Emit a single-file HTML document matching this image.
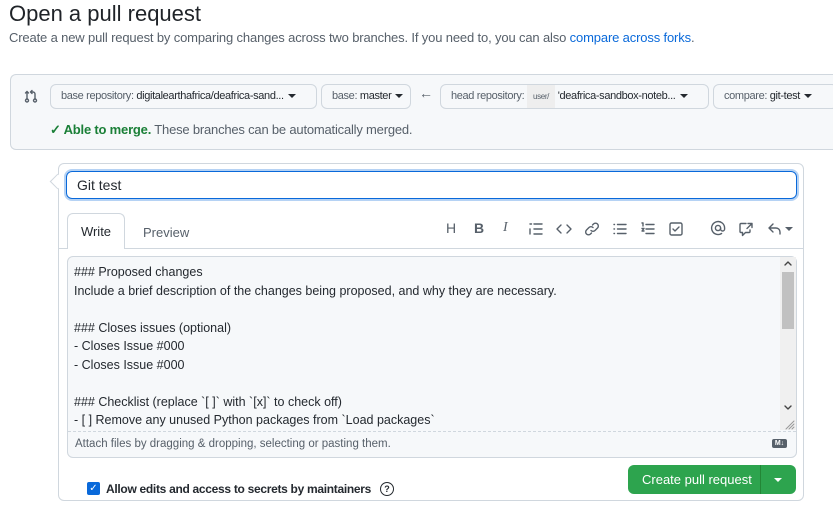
<!DOCTYPE html>
<html><head><meta charset="utf-8"><style>
*{box-sizing:border-box;margin:0;padding:0}
body{width:833px;height:511px;overflow:hidden;background:#fff;font-family:"Liberation Sans",Arial,sans-serif;color:#24292f;position:relative}
.a{position:absolute;white-space:nowrap}
.btn{position:absolute;height:25px;border:1px solid #d0d7de;border-radius:6px;background:#f6f8fa;font-size:11px;letter-spacing:-0.35px;line-height:23px;padding-left:10px;color:#57606a;white-space:nowrap;overflow:hidden}
.btn b{color:#24292f;font-weight:normal}
.car{display:inline-block;width:0;height:0;border-left:4px solid transparent;border-right:4px solid transparent;border-top:4px solid #24292f;vertical-align:middle;margin-left:4px}
.ln{position:absolute;left:74px;font-size:12.5px;color:#24292f;white-space:nowrap}
svg.i{position:absolute;fill:none;stroke:#57606a;stroke-width:1.4;stroke-linecap:round;stroke-linejoin:round}
</style></head><body>
<div class="a" style="left:9px;top:1px;font-size:22px;color:#1f2328">Open a pull request</div>
<div class="a" style="left:9px;top:30px;font-size:13px;color:#57606a;letter-spacing:-0.15px">Create a new pull request by comparing changes across two branches. If you need to, you can also <span style="color:#0969da">compare across forks</span>.</div>

<div style="position:absolute;left:10px;top:74px;width:823px;height:76px;background:#f6f8fa;border:1px solid #d0d7de;border-right:none;border-radius:6px 0 0 6px"></div>
<svg class="i" style="left:23px;top:88px" width="16" height="16" viewBox="0 0 16 16"><circle cx="4" cy="12.5" r="1.5"/><path d="M4 11V3.5M2.5 5L4 3.5 5.5 5"/><circle cx="12" cy="12.5" r="1.5"/><path d="M12 11V6a2 2 0 0 0-2-2H7.5M9 2.5L7.5 4 9 5.5"/></svg>
<div class="btn" style="left:50px;top:84px;width:267px">base repository: <b>digitalearthafrica/deafrica-sand...</b><span class="car"></span></div>
<div class="btn" style="left:321px;top:84px;width:90px">base: <b>master</b><span class="car"></span></div>
<div class="a" style="left:419px;top:85px;font-size:14px;color:#57606a">&#8592;</div>
<div class="btn" style="left:440px;top:84px;width:269px">head repository: <span style="display:inline-block;background:#eee;font-size:8px;padding:0 6px;line-height:23px;vertical-align:top">user/</span> <b>'deafrica-sandbox-noteb...</b><span class="car"></span></div>
<div class="btn" style="left:713px;top:84px;width:125px">compare: <b>git-test</b><span class="car"></span></div>
<div class="a" style="left:50px;top:122px;font-size:13px;color:#57606a;letter-spacing:-0.2px"><span style="color:#1a7f37;font-weight:bold">&#10003; Able to merge.</span> These branches can be automatically merged.</div>

<div style="position:absolute;left:58px;top:163px;width:746px;height:338px;border:1px solid #d0d7de;border-radius:6px"></div>
<div style="position:absolute;left:52px;top:176px;width:11px;height:11px;background:#fff;border-left:1px solid #d0d7de;border-bottom:1px solid #d0d7de;transform:rotate(45deg)"></div>
<div style="position:absolute;left:66px;top:171px;width:731px;height:28px;border:1px solid #0969da;border-radius:6px;box-shadow:0 0 0 2px rgba(9,105,218,.3);font-size:14px;line-height:26px;padding-left:10px">Git test</div>

<div style="position:absolute;left:59px;top:248px;width:744px;border-top:1px solid #d0d7de"></div>
<div style="position:absolute;left:67px;top:213px;width:58px;height:36px;background:#fff;border:1px solid #d0d7de;border-bottom:none;border-radius:6px 6px 0 0;font-size:13px;line-height:36px;text-align:center">Write</div>
<div class="a" style="left:143px;top:225px;font-size:13px;color:#57606a">Preview</div>

<div class="a" style="left:446px;top:220px;font-size:14px;color:#57606a">H</div>
<div class="a" style="left:474px;top:220px;font-size:14px;font-weight:bold;color:#57606a">B</div>
<div class="a" style="left:503px;top:220px;font-size:14px;font-style:italic;color:#57606a;font-family:'Liberation Serif',serif">I</div>
<svg class="i" style="left:528px;top:221px" width="16" height="16" viewBox="0 0 16 16"><path d="M2 3h1.5M2 8v5M6 3h8M6 8h8M6 13h8"/></svg>
<svg class="i" style="left:556px;top:221px" width="16" height="16" viewBox="0 0 16 16"><path d="M5 4L1 8l4 4M11 4l4 4-4 4"/></svg>
<svg class="i" style="left:584px;top:221px" width="16" height="16" viewBox="0 0 16 16"><path d="M7 9.5a3 3 0 0 0 4 0l2.5-2.5a2.8 2.8 0 0 0-4-4L8.5 4M9 6.5a3 3 0 0 0-4 0L2.5 9a2.8 2.8 0 0 0 4 4L7.5 12"/></svg>
<svg class="i" style="left:612px;top:221px" width="16" height="16" viewBox="0 0 16 16"><path d="M2 3.5h.5M2 8h.5M2 12.5h.5M5.5 3.5H14M5.5 8H14M5.5 12.5H14"/></svg>
<svg class="i" style="left:640px;top:221px" width="16" height="16" viewBox="0 0 16 16"><path d="M2 2h1v3M2 7.5h2L2 10h2M6 3.5h8M6 8h8M6 12.5h8"/></svg>
<svg class="i" style="left:668px;top:221px" width="16" height="16" viewBox="0 0 16 16"><rect x="2" y="2" width="12" height="12" rx="1.5"/><path d="M5 8l2 2 4-4"/></svg>
<svg class="i" style="left:710px;top:220px" width="16" height="16" viewBox="0 0 16 16"><circle cx="8" cy="8" r="2.6"/><path d="M10.6 8v1a2 2 0 0 0 4 0V8a6.5 6.5 0 1 0-3 5.5"/></svg>
<svg class="i" style="left:738px;top:221px" width="16" height="16" viewBox="0 0 16 16"><path d="M8 2.5H3a1 1 0 0 0-1 1v7a1 1 0 0 0 1 1h1.5v3l3-3H11a1 1 0 0 0 1-1V9M10 2.5h4v4M14 2.5L9 7.5"/></svg>
<svg class="i" style="left:767px;top:221px" width="16" height="16" viewBox="0 0 16 16"><path d="M6 3L2 7l4 4M2 7h7a4 4 0 0 1 4 4v2"/></svg>
<span class="car" style="position:absolute;left:785px;top:227px;border-top-color:#57606a;margin:0"></span>

<div style="position:absolute;left:67px;top:256px;width:730px;height:202px;background:#f6f8fa;border:1px solid #d0d7de;border-radius:6px"></div>
<div style="position:absolute;left:780px;top:257px;width:16px;height:173px;background:#f0f0f0"></div>
<div style="position:absolute;left:782px;top:272px;width:12px;height:57px;background:#c1c1c1"></div>
<svg class="i" style="left:783px;top:259px;stroke:#444" width="10" height="8" viewBox="0 0 10 8"><path d="M2 6l3-3 3 3"/></svg>
<svg class="i" style="left:783px;top:404px;stroke:#444" width="10" height="8" viewBox="0 0 10 8"><path d="M2 2l3 3 3-3"/></svg>
<svg class="i" style="left:783px;top:418px;stroke:#999;stroke-width:1" width="12" height="12" viewBox="0 0 12 12"><path d="M11 3L3 11M11 6L6 11M11 9L9 11"/></svg>
<div style="position:absolute;left:68px;top:431px;width:728px;border-top:1px dashed #d0d7de"></div>
<div class="ln" style="top:265px">### Proposed changes</div>
<div class="ln" style="top:284px">Include a brief description of the changes being proposed, and why they are necessary.</div>
<div class="ln" style="top:321px">### Closes issues (optional)</div>
<div class="ln" style="top:339px">- Closes Issue #000</div>
<div class="ln" style="top:358px">- Closes Issue #000</div>
<div class="ln" style="top:395px">### Checklist (replace `[ ]` with `[x]` to check off)</div>
<div class="ln" style="top:413px">- [ ] Remove any unused Python packages from `Load packages`</div>
<div class="a" style="left:75px;top:438px;font-size:11.5px;color:#57606a">Attach files by dragging &amp; dropping, selecting or pasting them.</div>
<div class="a" style="left:772px;top:439px;width:15px;height:9px;background:#57606a;border-radius:2px;color:#fff;font-size:7px;line-height:9px;text-align:center;font-weight:bold">M↓</div>

<div style="position:absolute;left:87px;top:482px;width:13px;height:13px;background:#0969da;border-radius:2px;color:#fff;font-size:10px;line-height:13px;text-align:center">&#10003;</div>
<div class="a" style="left:106px;top:482px;font-size:12px;font-weight:bold;letter-spacing:-0.3px">Allow edits and access to secrets by maintainers</div>
<div class="a" style="left:380px;top:482px;width:14px;height:14px;border:1.3px solid #24292f;border-radius:50%;font-size:9px;line-height:12px;text-align:center;font-weight:bold">?</div>

<div style="position:absolute;left:628px;top:465px;width:168px;height:29px;background:#2da44e;border-radius:6px"></div>
<div style="position:absolute;left:760px;top:465px;width:1px;height:29px;background:#238636"></div>
<div class="a" style="left:642px;top:472px;font-size:13px;color:#fff">Create pull request</div>
<span class="car" style="position:absolute;left:774px;top:478px;border-top-color:#fff;margin:0"></span>
</body></html>
